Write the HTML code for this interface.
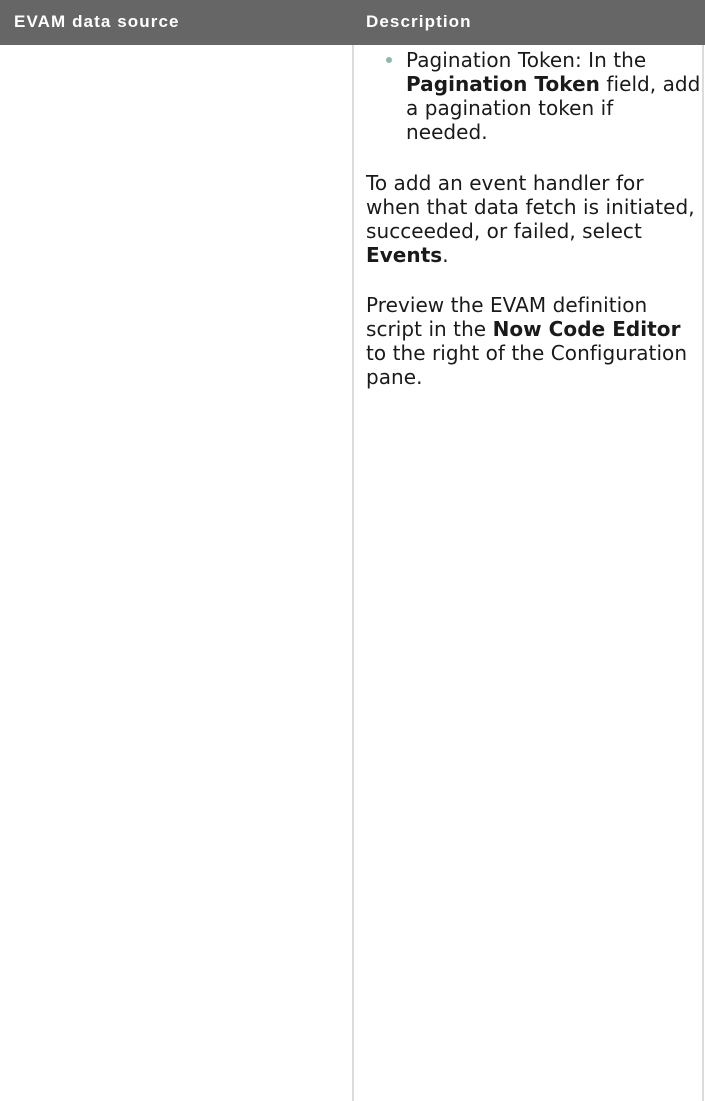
<!DOCTYPE html>
<html><head><meta charset="utf-8"><style>
html,body{margin:0;padding:0;background:#fff;width:705px;height:1101px;overflow:hidden}
body{position:relative;font-family:"DejaVu Sans","Liberation Sans",sans-serif;color:#1a1a1a}
.hdr{position:absolute;left:0;top:0;width:705px;height:45px;background:#666}
.hdr span{position:absolute;top:12px;color:#fff;font-weight:bold;font-size:17px;font-family:"Liberation Sans",sans-serif;letter-spacing:1.1px}
.vl{position:absolute;top:45px;bottom:0;width:2px;background:#dcdcdc}
.t{position:absolute;font-size:20px;line-height:24px;white-space:nowrap;letter-spacing:0.05px}
b{font-weight:bold}
.dot{position:absolute;left:386px;top:57px;width:6px;height:6px;border-radius:50%;background:#8fb8aa}
</style></head><body>
<div class="hdr"><span style="left:14px">EVAM data source</span><span style="left:366px">Description</span></div>
<div class="vl" style="left:352px"></div>
<div class="vl" style="left:702px"></div>
<div class="dot"></div>
<div class="t" style="left:406px;top:48px">Pagination Token: In the<br><b>Pagination Token</b> field, add<br>a pagination token if<br>needed.</div>
<div class="t" style="left:366px;top:171px">To add an event handler for<br>when that data fetch is initiated,<br>succeeded, or failed, select<br><b>Events</b>.</div>
<div class="t" style="left:366px;top:293px">Preview the EVAM definition<br>script in the <b>Now Code Editor</b><br>to the right of the Configuration<br>pane.</div>
</body></html>
